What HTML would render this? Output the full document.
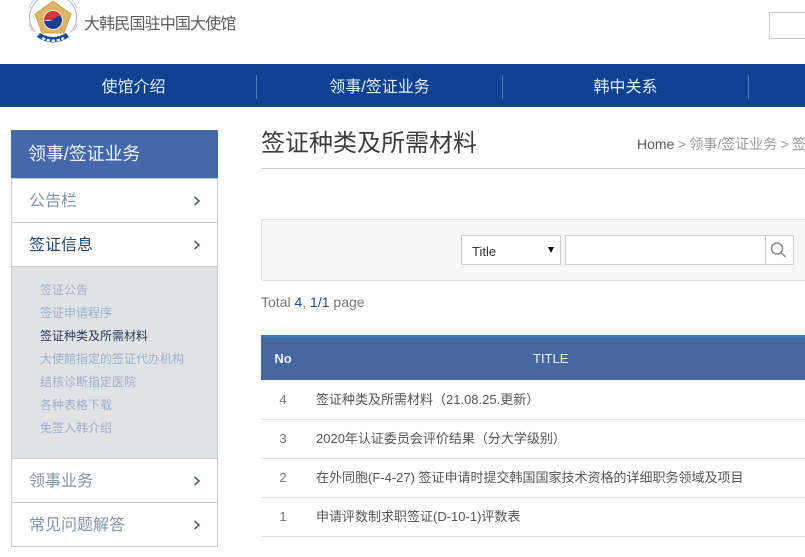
<!DOCTYPE html>
<html lang="zh"><head><meta charset="utf-8"><title>签证种类及所需材料</title>
<style>
html,body{margin:0;padding:0;background:#fff}
body{position:relative;width:805px;height:557px;overflow:hidden;font-family:"Liberation Sans","Noto Sans CJK SC",sans-serif;color:#555}
.a{position:absolute;white-space:nowrap}
.b{position:absolute;box-sizing:border-box}
.nav{font-size:16px;color:#e4eefa;top:65px;height:43px;line-height:45px;text-align:center}
.sep{position:absolute;top:75px;width:1px;height:24px;background:#4f77b0}
.item{position:absolute;left:11px;width:207px;height:45px;box-sizing:border-box;border:1px solid #ccc;background:#fff;font-size:16px;line-height:45px;padding-left:17px;color:#7f94ad}
.item svg{position:absolute;left:181px;top:16px}
.sub{position:absolute;left:40px;font-size:12px;color:#9db0cc;line-height:16px;white-space:nowrap}
.line{position:absolute;left:261px;width:544px;height:1px;background:#ddd}
.no{position:absolute;left:261px;width:44px;text-align:center;font-size:13px;color:#777;line-height:16px}
.t{position:absolute;left:316px;font-size:13px;color:#555;line-height:16px;white-space:nowrap}
</style></head><body>

<svg class="b" style="left:29px;top:0" width="48" height="46" viewBox="0 0 48 46">
<path d="M6 32A22 22 0 0 1 9 0M42 32A22 22 0 0 0 39 0" fill="none" stroke="#aab4c0" stroke-width="1"/>
<path d="M3.500 31A24 24 0 0 1 5 0M44.500 31A24 24 0 0 0 43 0" fill="none" stroke="#c5ccd4" stroke-width="1"/>
<path d="M24 1L42 14L35 33H13L6 14Z" fill="#d9b565" stroke="#c9a552" stroke-width="1" stroke-linejoin="round"/>
<circle cx="24" cy="20" r="10" fill="#f3ece0"/>
<path d="M15 20A9 9 0 0 1 33 20Z" fill="#d8343c"/>
<path d="M15 20A9 9 0 0 0 33 20C33 16 29 15 26 18C23 21 18 22 15 20Z" fill="#1d3f8c"/>
<path d="M8 37Q24 48 40 37L37 33Q24 41 11 33Z" fill="#1d4a8c"/>
<path d="M13 38Q24 43.500 35 38" fill="none" stroke="#dfe6f0" stroke-width="2.500" stroke-dasharray="3.500 1.500"/>
</svg>
<div class="a" style="left:84px;top:13px;font-size:16px;line-height:24px;color:#5c5c5c;letter-spacing:-.85px">大韩民国驻中国大使馆</div>
<div class="b" style="left:769px;top:12px;width:36px;height:27px;border:1px solid #ccc;border-right:0"></div>

<div class="b" style="left:0;top:64px;width:805px;height:43px;background:#0e4290"></div>
<div class="a nav" style="left:11px;width:245px">使馆介绍</div>
<div class="a nav" style="left:257px;width:245px">领事/签证业务</div>
<div class="a nav" style="left:503px;width:245px">韩中关系</div>
<div class="sep" style="left:256px"></div><div class="sep" style="left:502px"></div><div class="sep" style="left:748px"></div>

<div class="b" style="left:11px;top:130px;width:207px;height:48px;background:#4468a9"></div>
<div class="a" style="left:28px;top:142px;font-size:18px;line-height:25px;color:#eef2f8;letter-spacing:-.1px">领事/签证业务</div>

<div class="item" style="top:178px">公告栏<svg width="8" height="12" viewBox="0 0 8 12"><path d="M1.500 2L6 6L1.500 10" fill="none" stroke="#5d6a78" stroke-width="1.800"/></svg></div>
<div class="item" style="top:222px;color:#23466f">签证信息<svg width="8" height="12" viewBox="0 0 8 12"><path d="M1.500 2L6 6L1.500 10" fill="none" stroke="#5d6a78" stroke-width="1.800"/></svg></div>
<div class="b" style="left:11px;top:266px;width:207px;height:193px;background:#e1e2e3;border:1px solid #ccc"></div>
<div class="sub" style="top:282px">签证公告</div>
<div class="sub" style="top:305px">签证申请程序</div>
<div class="sub" style="top:328px;color:#263c5c">签证种类及所需材料</div>
<div class="sub" style="top:351px">大使館指定的签证代办机构</div>
<div class="sub" style="top:374px">结核诊断指定医院</div>
<div class="sub" style="top:397px">各种表格下载</div>
<div class="sub" style="top:420px">免签入韩介绍</div>
<div class="item" style="top:458px">领事业务<svg width="8" height="12" viewBox="0 0 8 12"><path d="M1.500 2L6 6L1.500 10" fill="none" stroke="#5d6a78" stroke-width="1.800"/></svg></div>
<div class="item" style="top:502px">常见问题解答<svg width="8" height="12" viewBox="0 0 8 12"><path d="M1.500 2L6 6L1.500 10" fill="none" stroke="#5d6a78" stroke-width="1.800"/></svg></div>

<div class="a" style="left:261px;top:127px;font-size:24px;line-height:34px;color:#3c3c3c">签证种类及所需材料</div>
<div class="a" style="left:637px;top:135px;width:168px;overflow:hidden;font-size:14px;line-height:18px;color:#999;word-spacing:-.5px"><span style="color:#555">Home</span> &gt; 领事/签证业务 &gt; 签证信息</div>
<div class="line" style="top:168px;background:#ccc"></div>

<div class="b" style="left:261px;top:219px;width:544px;height:62px;background:#f7f7f7;border:1px solid #e0e0e0;border-right:0"></div>
<div class="b" style="left:461px;top:235px;width:100px;height:30px;background:#fff;border:1px solid #ccc"></div>
<div class="a" style="left:472px;top:244px;font-size:13px;line-height:16px;color:#333">Title</div>
<svg class="b" style="left:547px;top:246px" width="8" height="8" viewBox="0 0 8 8"><path d="M1 1H7L4 7Z" fill="#111"/></svg>
<div class="b" style="left:565px;top:235px;width:201px;height:30px;background:#fff;border:1px solid #ccc"></div>
<div class="b" style="left:765px;top:235px;width:29px;height:30px;background:#fff;border:1px solid #ccc"></div>
<svg class="b" style="left:770px;top:241px" width="18" height="18" viewBox="0 0 18 18"><circle cx="7" cy="7.500" r="5.500" fill="none" stroke="#888" stroke-width="1.500"/><path d="M11 11.500L15.500 16" stroke="#888" stroke-width="1.500"/></svg>

<div class="a" style="left:261px;top:294px;font-size:14px;line-height:17px;color:#777">Total <span style="color:#1d4f91">4</span>, <span style="color:#1d4f91">1/1</span> page</div>

<div class="b" style="left:261px;top:335px;width:544px;height:45px;background:#46689f;border-top:3px solid #3b78bb"></div>
<div class="a" style="left:261px;top:351px;width:44px;text-align:center;font-size:13px;font-weight:bold;line-height:16px;color:#e8eef7">No</div>
<div class="a" style="left:533px;top:351px;font-size:13px;line-height:16px;color:#f0f4fa">TITLE</div>

<div class="no" style="top:392px">4</div>
<div class="t" style="top:392px">签证种类及所需材料（21.08.25.更新）</div>
<div class="line" style="top:419px"></div>
<div class="no" style="top:431px">3</div>
<div class="t" style="top:431px">2020年认证委员会评价结果（分大学级别）</div>
<div class="line" style="top:458px"></div>
<div class="no" style="top:470px">2</div>
<div class="t" style="top:470px">在外同胞(F-4-27) 签证申请时提交韩国国家技术资格的详细职务领域及项目</div>
<div class="line" style="top:497px"></div>
<div class="no" style="top:509px">1</div>
<div class="t" style="top:509px">申请评数制求职签证(D-10-1)评数表</div>
<div class="line" style="top:536px"></div>
</body></html>
